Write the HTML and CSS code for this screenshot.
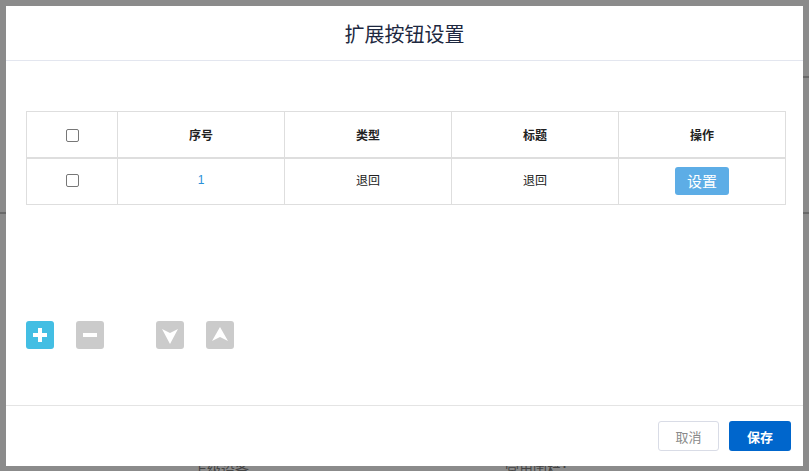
FILE: index.html
```html
<!DOCTYPE html>
<html lang="zh">
<head>
<meta charset="utf-8">
<link rel="stylesheet" href="styles.css">
</head>
<body>
<div class="page">
  <div class="under">
    <span class="under-a">上级设备</span>
    <span class="under-b">常用围栏：</span>
  </div>
  <span class="mark mark-l"></span>
  <span class="mark mark-r1"></span>
  <span class="mark mark-r2"></span>
  <div class="modal">
    <div class="modal-header">扩展按钮设置</div>
    <div class="modal-body">
      <table class="grid">
        <thead>
          <tr>
            <th class="c-check"><span class="checkbox"></span></th>
            <th class="c-mid">序号</th>
            <th class="c-mid">类型</th>
            <th class="c-mid">标题</th>
            <th>操作</th>
          </tr>
        </thead>
        <tbody>
          <tr>
            <td class="c-check"><span class="checkbox"></span></td>
            <td class="num">1</td>
            <td>退回</td>
            <td>退回</td>
            <td class="op"><button class="btn-set">设置</button></td>
          </tr>
        </tbody>
      </table>
      <div class="tools">
        <span class="tool tool-add">
          <svg width="28" height="28" viewBox="0 0 28 28"><path d="M14 7v14M7 14h14" stroke="#fff" stroke-width="4"/></svg>
        </span>
        <span class="tool">
          <svg width="28" height="28" viewBox="0 0 28 28"><path d="M7 14h14" stroke="#fff" stroke-width="4"/></svg>
        </span>
        <span class="tool tool-gap">
          <svg width="28" height="28" viewBox="0 0 28 28"><path d="M6 8L14 12L22 8L14 23Z" fill="#fff"/></svg>
        </span>
        <span class="tool">
          <svg width="28" height="28" viewBox="0 0 28 28"><path d="M14 6L22 20L14 16L6 20Z" fill="#fff"/></svg>
        </span>
      </div>
    </div>
    <div class="modal-footer">
      <button class="btn btn-cancel">取消</button>
      <button class="btn btn-save">保存</button>
    </div>
  </div>
</div>
</body>
</html>
```
FILE: styles.css
```css
html, body {
  margin: 0;
  padding: 0;
}
body {
  width: 809px;
  height: 471px;
  overflow: hidden;
  background: #8b8b8b;
  font-family: "Liberation Sans", "Noto Sans CJK SC", sans-serif;
}
.page {
  position: relative;
  width: 809px;
  height: 471px;
  padding: 6px 6px 0;
  box-sizing: border-box;
}
.under {
  position: absolute;
  left: 0;
  top: 459px;
  width: 809px;
  font-size: 14px;
  color: #444;
}
.under-a { position: absolute; left: 193px; top: 0; }
.under-b { position: absolute; left: 505px; top: 0; }
.mark {
  position: absolute;
  background: #6a6a6a;
  height: 2px;
  width: 6px;
}
.mark-l { left: 0; top: 212px; }
.mark-r1 { right: 0; top: 76px; }
.mark-r2 { right: 0; top: 212px; }
.modal {
  position: relative;
  width: 797px;
  height: 460px;
  background: #fff;
  display: flex;
  flex-direction: column;
}
.modal-header {
  height: 54px;
  border-bottom: 1px solid #e3e6ef;
  display: flex;
  align-items: center;
  justify-content: center;
  font-size: 20px;
  color: #1d2840;
  font-family: "Noto Sans CJK SC", sans-serif;
}
.modal-body {
  flex: 1;
  padding: 50px 17px 0 20px;
}
.grid {
  width: 760px;
  border-collapse: collapse;
  font-family: "Noto Sans CJK SC", sans-serif;
  font-size: 12px;
  color: #222;
}
.grid th, .grid td {
  border: 1px solid #dedede;
  text-align: center;
  padding: 0;
}
.grid th {
  height: 45px;
  font-weight: bold;
  border-bottom: 2px solid #dedede;
}
.grid td {
  height: 41px;
  padding-bottom: 4px;
}
.grid td.op {
  padding-bottom: 2px;
  height: 43px;
}
.c-check { width: 90px; }
.c-mid { width: 166px; }
.checkbox {
  display: inline-block;
  width: 11px;
  height: 11px;
  border: 1px solid #777;
  border-radius: 2px;
  vertical-align: middle;
  position: relative;
  top: -1px;
}
.num {
  color: #2b8fd8;
  font-family: "Liberation Sans", sans-serif;
}
.btn-set {
  width: 54px;
  height: 28px;
  border: 0;
  border-radius: 3px;
  background: #5dade6;
  color: #fff;
  font-family: "Noto Sans CJK SC", sans-serif;
  font-size: 15px;
  padding: 0;
}
.tools {
  display: flex;
  gap: 22px;
  margin-top: 116px;
}
.tool {
  width: 28px;
  height: 28px;
  border-radius: 3px;
  background: #cbcbcb;
  display: block;
}
.tool svg { display: block; }
.tool-add { background: #43bee3; }
.tool-gap { margin-left: 30px; }
.modal-footer {
  height: 61px;
  border-top: 1px solid #e4e4e4;
  display: flex;
  justify-content: flex-end;
  align-items: flex-start;
  gap: 10px;
  padding: 15px 12px 0 0;
  box-sizing: border-box;
}
.btn {
  height: 30px;
  border-radius: 3px;
  font-family: "Noto Sans CJK SC", sans-serif;
  font-size: 13px;
  padding: 0;
  cursor: pointer;
}
.btn-cancel {
  width: 61px;
  background: #fff;
  border: 1px solid #d9dce6;
  color: #8a8a8a;
}
.btn-save {
  width: 62px;
  background: #0066cc;
  border: 0;
  color: #fff;
  font-weight: bold;
}
```
